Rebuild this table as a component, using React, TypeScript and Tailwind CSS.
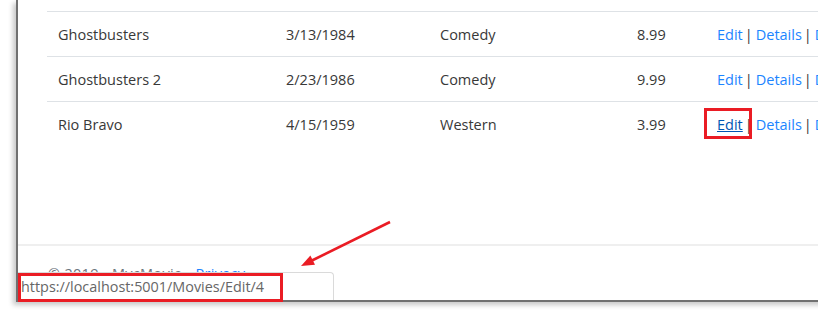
import React from "react"

const movies = [
  { title: "Ghostbusters", date: "3/13/1984", genre: "Comedy", price: "8.99" },
  { title: "Ghostbusters 2", date: "2/23/1986", genre: "Comedy", price: "9.99" },
  { title: "Rio Bravo", date: "4/15/1959", genre: "Western", price: "3.99" },
]

export default function App() {
  return (
    <div
      className="relative w-[818px] h-[335px] bg-white overflow-hidden text-[#383838]"
      style={{ fontFamily: '"Segoe UI", "Open Sans", sans-serif' }}
    >
      {/* browser window */}
      <div className="relative ml-[16px] w-[820px] h-[302px] bg-white border-l-2 border-b-2 border-[#707070] shadow-[-3px_3px_5px_rgba(0,0,0,0.22)]">
        <div className="h-[11px]" />
        <div className="ml-[29px] w-[900px] text-[14.5px] leading-[22px]">
          {movies.map((m, i) => (
            <div
              key={i}
              className="grid grid-cols-[228px_154px_197px_80px_241px] border-t border-[#dee2e6] pt-[12px] pb-[10px]"
            >
              <div className="pl-[11px]">{m.title}</div>
              <div className="pl-[11px]">{m.date}</div>
              <div className="pl-[11px]">{m.genre}</div>
              <div className="pl-[11px]">{m.price}</div>
              <div className="pl-[11px] whitespace-nowrap">
                <a className={i === 2 ? "text-[#0056b3] underline" : "text-[#1c84ff]"}>Edit</a>
                <span className="ml-[2px] mr-[3px]">|</span>
                <a className="text-[#1c84ff]">Details</a>
                <span className="ml-[2px] mr-[3px]">|</span>
                <a className="text-[#1c84ff]">Delete</a>
              </div>
            </div>
          ))}
        </div>

        {/* footer */}
        <div className="mt-[98px] border-t-2 border-[#efefef] pt-[17px] pl-[30px] text-[14.5px] leading-[22px] tracking-[0.3px] text-[#6c757d]">
          © 2019 - MvcMovie - <a className="text-[#1c84ff]">Privacy</a>
        </div>

        {/* status bar */}
        <div className="absolute left-0 bottom-0 w-[316px] h-[28px] bg-white border-t border-r border-[#dadada] rounded-tr-[4px] pl-[3px] text-[14.4px] leading-[28px] text-[#666] whitespace-nowrap">
          https://localhost:5001/Movies/Edit/4
        </div>
      </div>

      {/* annotations */}
      <div className="absolute left-[704px] top-[108px] w-[48px] h-[31px] border-[3px] border-[#ea1c24]" />
      <div className="absolute left-[18px] top-[273px] w-[265px] h-[29px] border-[3px] border-[#ea1c24]" />
      <svg className="absolute left-0 top-0" width="818" height="335" viewBox="0 0 818 335">
        <line x1="390" y1="222" x2="312" y2="260.5" stroke="#ea1c24" strokeWidth="2.6" />
        <polygon points="301,266 315,264.8 310.4,255.4" fill="#ea1c24" />
      </svg>
    </div>
  )
}
